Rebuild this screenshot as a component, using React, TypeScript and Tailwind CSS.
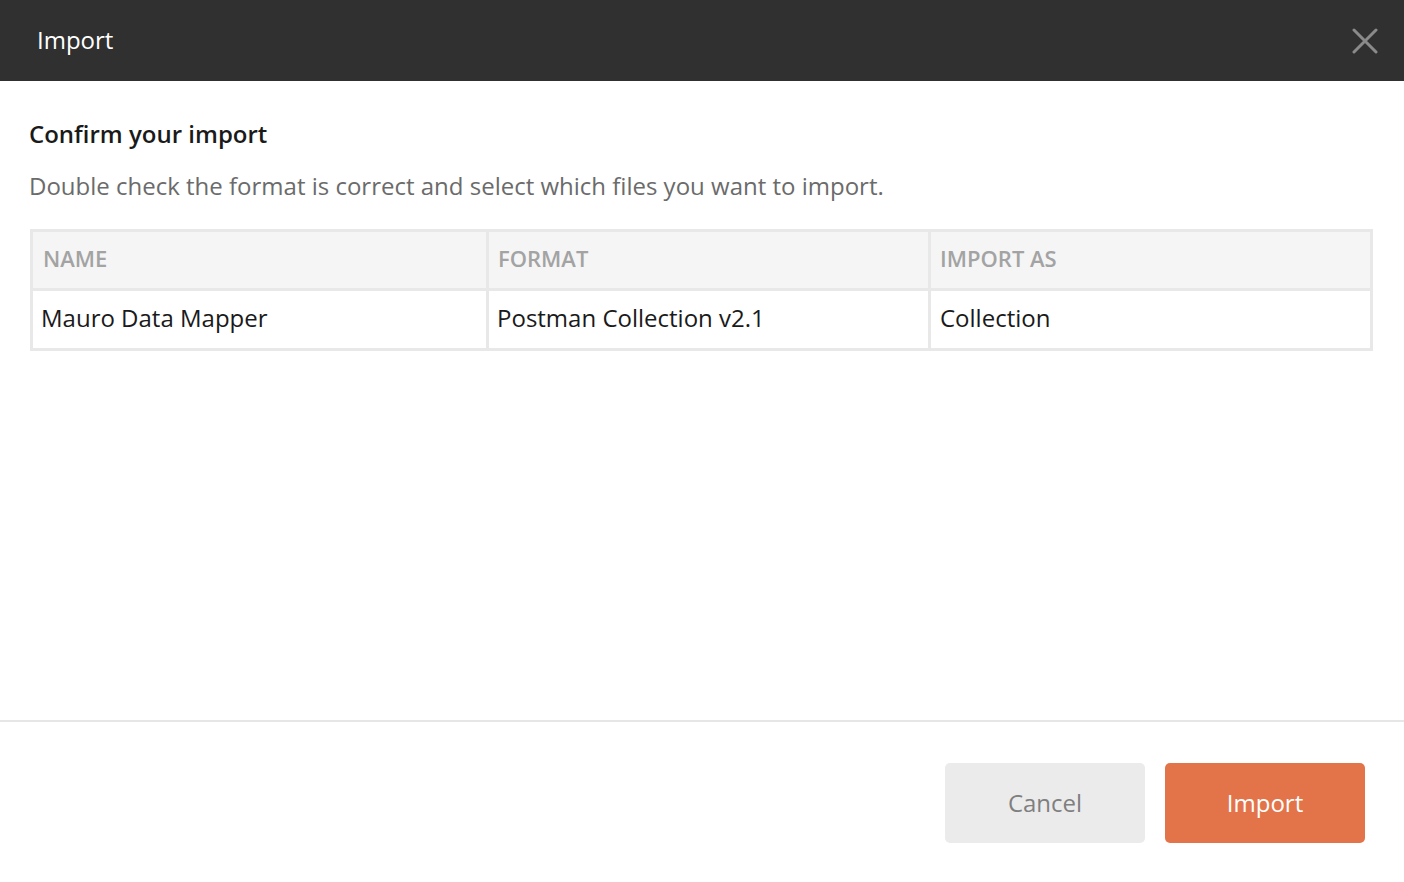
import React from "react";

export default function App() {
  const font = { fontFamily: '"Open Sans", "Noto Sans", sans-serif' };
  return (
    <div className="w-[1404px] h-[882px] flex flex-col bg-white overflow-hidden" style={font}>
      <div className="h-[81px] shrink-0 bg-[#303030] flex items-center justify-between pl-[37px] pr-[26px]">
        <span className="text-white text-[24px] leading-none mb-[1px]">Import</span>
        <svg width="26" height="26" viewBox="0 0 26 26" className="mt-[1px]">
          <path d="M2 2 L24 24 M24 2 L2 24" stroke="#8a8a8a" strokeWidth="3" strokeLinecap="round" />
        </svg>
      </div>
      <div className="flex-1 flex flex-col pl-[29px] pr-[30px] pt-[38px]">
        <h2 className="text-[24px] font-semibold text-[#1a1a1a] leading-[30px]">Confirm your import</h2>
        <p className="text-[24px] text-[#6b6b6b] leading-[30px] mt-[22px]">
          Double check the format is correct and select which files you want to import.
        </p>
        <div className="mt-[28px] ml-[1px] w-[1343px] bg-[#e8e8e8] p-[3px] grid grid-cols-[453px_439px_439px] gap-[3px]">
          <div className="bg-[#f5f5f5] h-[56px] flex items-center pb-[3px] px-[10px] text-[22px] font-semibold text-[#a3a3a3]">NAME</div>
          <div className="bg-[#f5f5f5] h-[56px] flex items-center pb-[3px] px-[9px] text-[22px] font-semibold text-[#a3a3a3]">FORMAT</div>
          <div className="bg-[#f5f5f5] h-[56px] flex items-center pb-[3px] px-[9px] text-[22px] font-semibold text-[#a3a3a3]">IMPORT AS</div>
          <div className="bg-white h-[57px] flex items-center pb-[3px] px-[8px] text-[24px] text-[#1a1a1a]">Mauro Data Mapper</div>
          <div className="bg-white h-[57px] flex items-center pb-[3px] px-[8px] text-[24px] text-[#1a1a1a]">Postman Collection v2.1</div>
          <div className="bg-white h-[57px] flex items-center pb-[3px] px-[9px] text-[24px] text-[#1a1a1a]">Collection</div>
        </div>
      </div>
      <div className="h-[2px] bg-[#e6e6e6] shrink-0" />
      <div className="h-[160px] shrink-0 flex items-start justify-end pt-[41px] pr-[39px] gap-[20px]">
        <button className="w-[200px] h-[80px] rounded-[5px] bg-[#ebebeb] text-[#7f7f7f] text-[24px]">Cancel</button>
        <button className="w-[200px] h-[80px] rounded-[5px] bg-[#e3744a] text-white text-[24px]">Import</button>
      </div>
    </div>
  );
}
